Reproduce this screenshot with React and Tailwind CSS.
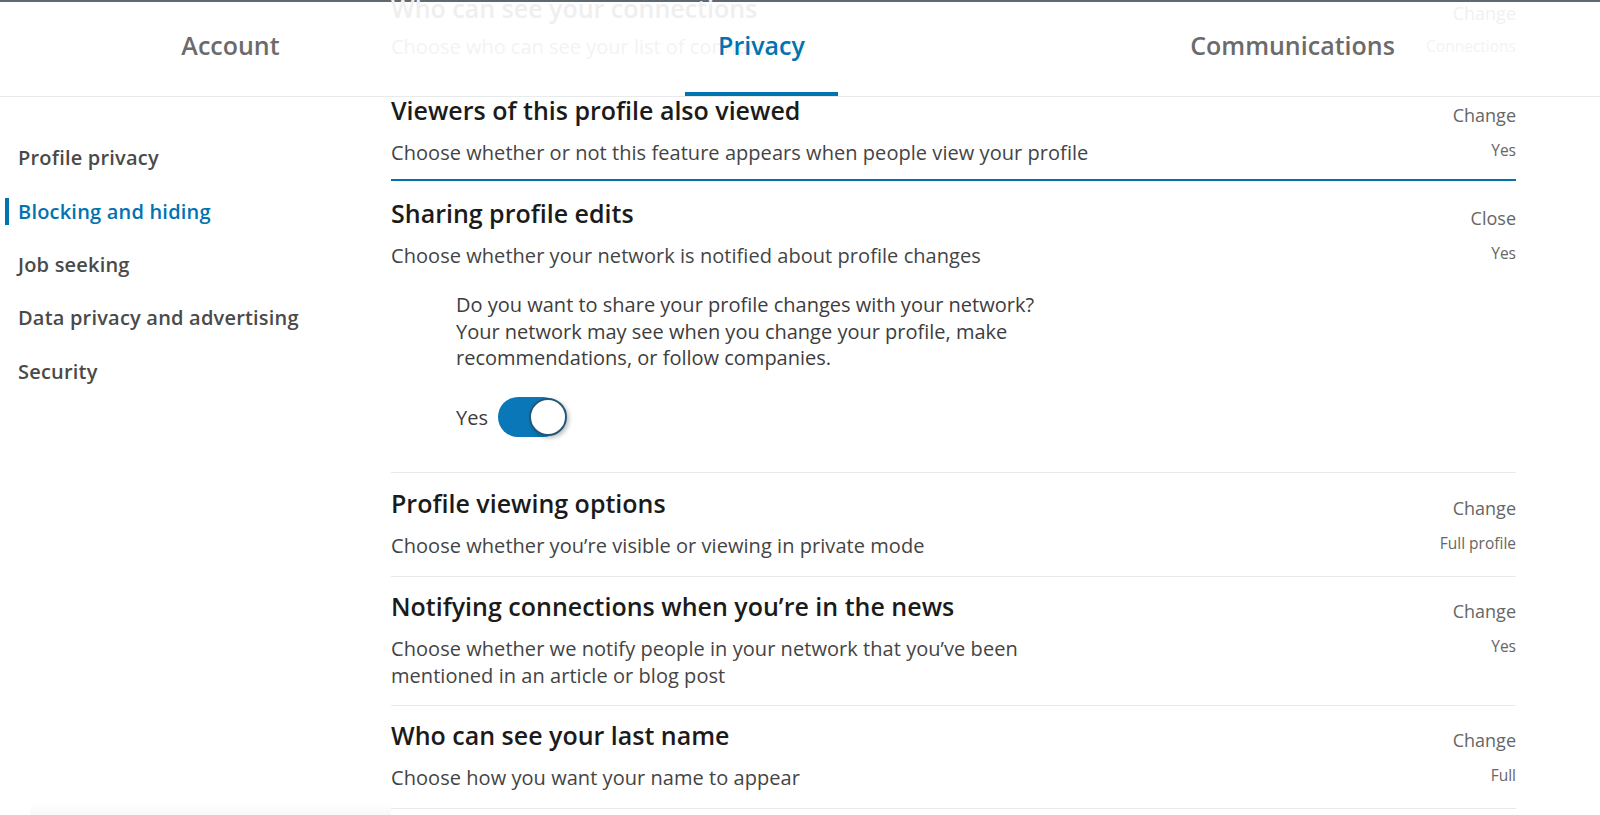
import React from 'react';

const BLUE = 'text-[#0073b1]';

const tabs = [
  { label: 'Account' },
  { label: 'Privacy', active: true },
  { label: 'Communications' },
];

const sideNav = [
  { label: 'Profile privacy' },
  { label: 'Blocking and hiding', active: true },
  { label: 'Job seeking' },
  { label: 'Data privacy and advertising' },
  { label: 'Security' },
];

const SettingRow = ({ title, desc, action = 'Change', value, border = 'border-[#e9eaeb]', thick, pb = 'pb-[17px]', pt = 'pt-[15px]', children }) => {
  return (
    <div className={`${pt} ${pb} ${thick ? 'border-b-2' : 'border-b'} ${border}`}>
      <div className="flex justify-between">
        <div>
          <div className="text-[25px] leading-[30px] font-semibold text-[#1b1b1b]">{title}</div>
          <div className="mt-[14px] text-[20px] leading-[27px] text-[#444] tracking-[0.05px]">{desc}</div>
        </div>
        <div className="flex flex-col items-end pt-[8px]">
          <div className="text-[18px] leading-[24px] text-[#666]">{action}</div>
          <div className="mt-[13px] text-[15.5px] leading-[20px] text-[#666]">{value}</div>
        </div>
      </div>
      {children}
    </div>
  );
};

const Toggle = () => (
  <div className="w-[65px] h-[40px] rounded-full bg-[#0a78b8] flex items-center justify-end">
    <div className="w-[38px] h-[38px] -mr-[4px] rounded-full bg-white border-2 border-[#24587a] shadow-[2px_2px_4px_rgba(0,0,0,0.25)]" />
  </div>
);

export default function App() {
  return (
    <div className="w-full h-[815px] overflow-hidden bg-white font-['Open_Sans','Liberation_Sans',sans-serif] flex flex-col">
      <div className="relative h-[97px] shrink-0 border-t-2 border-[#5e6a70] border-b border-b-[#e8eaec] bg-white">
        <div className="absolute left-[391px] right-[84px] -top-[9px] flex justify-between pointer-events-none">
          <div>
            <div className="text-[25px] leading-[30px] font-semibold text-[#efefef]">Who can see your connections</div>
            <div className="mt-[10px] text-[20px] leading-[27px] text-[#f3f3f3]">Choose who can see your list of connections</div>
          </div>
          <div className="flex flex-col items-end pt-[8px]">
            <div className="text-[18px] leading-[24px] text-[#f1f1f1]">Change</div>
            <div className="mt-[11px] text-[15.5px] leading-[20px] text-[#f3f3f3]">Connections</div>
          </div>
        </div>
        <div className="relative flex h-full -ml-[35px]">
          {tabs.map((t) => (
            <div key={t.label} className="w-[531px] flex justify-center">
              <div
                className={`h-full flex items-center justify-center pb-[2px] text-[25px] font-semibold ${
                  t.active ? `w-[153px] border-b-4 border-[#0073b1] ${BLUE}` : 'text-[#6b6b6b] border-b-4 border-transparent'
                }`}
              >
                {t.label}
              </div>
            </div>
          ))}
        </div>
      </div>

      <div className="flex flex-1 min-h-0">
        {/* left navigation */}
        <div className="w-[391px] shrink-0 pt-[34px] flex flex-col">
          {sideNav.map((n) => (
            <div key={n.label} className="h-[53.5px] flex items-center">
              {n.active ? (
                <span className={`ml-[5px] pl-[9px] border-l-4 border-[#0073b1] leading-[27px] text-[20px] font-semibold tracking-[0.2px] ${BLUE}`}>
                  {n.label}
                </span>
              ) : (
                <span className="pl-[18px] text-[20px] font-semibold text-[#4a4a4a] tracking-[0.2px]">{n.label}</span>
              )}
            </div>
          ))}
          <div className="mt-auto ml-[30px] h-[12px] bg-gradient-to-b from-white to-[#f8f8f8]" />
        </div>

        {/* settings list */}
        <div className="w-[1125px] -mt-[2px]">
          <SettingRow
            pt="pt-0"
            pb="pb-[13px]"
            thick
            border="border-[#0073b1]"
            title="Viewers of this profile also viewed"
            desc="Choose whether or not this feature appears when people view your profile"
            value="Yes"
          />
          <SettingRow
            pt="pt-[17px]"
            pb="pb-[35px]"
            title="Sharing profile edits"
            desc="Choose whether your network is notified about profile changes"
            action="Close"
            value="Yes"
          >
            <div className="pl-[65px] mt-[23px] text-[20px] leading-[26.5px] text-[#3d3d3d]">
              Do you want to share your profile changes with your network?
              <br />
              Your network may see when you change your profile, make
              <br />
              recommendations, or follow companies.
            </div>
            <div className="pl-[65px] mt-[25px] flex items-center gap-[10px]">
              <span className="text-[20px] text-[#3d3d3d] pt-[3px]">Yes</span>
              <Toggle />
            </div>
          </SettingRow>
          <SettingRow
            title="Profile viewing options"
            desc="Choose whether you’re visible or viewing in private mode"
            value="Full profile"
          />
          <SettingRow
            pt="pt-[14px]"
            pb="pb-[16px]"
            title="Notifying connections when you’re in the news"
            desc={
              <>
                Choose whether we notify people in your network that you’ve been
                <br />
                mentioned in an article or blog post
              </>
            }
            value="Yes"
          />
          <SettingRow
            pt="pt-[14px]"
            title="Who can see your last name"
            desc="Choose how you want your name to appear"
            value="Full"
          />
        </div>
      </div>
    </div>
  );
}
